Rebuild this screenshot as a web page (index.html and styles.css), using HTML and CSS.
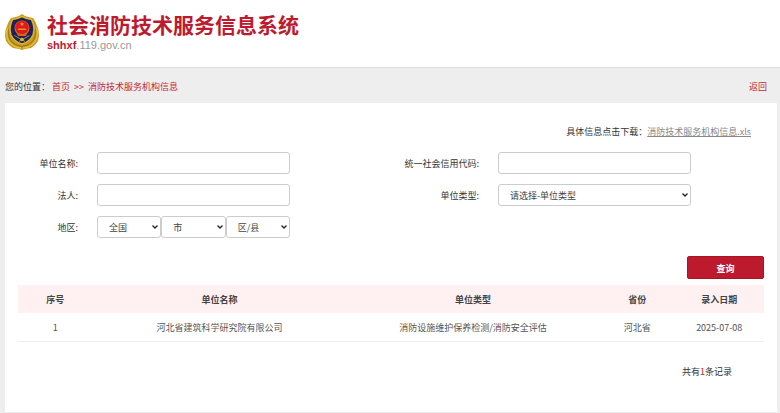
FILE: index.html
```html
<!DOCTYPE html>
<html lang="zh-CN">
<head>
    <meta charset="utf-8">
    <title>社会消防技术服务信息系统</title>
    <link rel="stylesheet" href="styles.css">
</head>
<body>
    <header class="header">
        <svg class="emblem" viewBox="0 0 34 36" aria-hidden="true">
            <!-- wreath -->
            <path d="M17 0 L20 2 Q25 3.500 28 4 L30.500 8 L32 12 L33.500 16 L34 22 L33 27 L30 31 L26 34 L20 35 L17 36 L14 35 L8 34 L4 31 L1 27 L0 22 L.5 16 L2 12 L3.500 8 L6 4 Q9 3.500 14 2 Z" fill="#c79c22"/>
            <path d="M2.500 14 Q0 22 4.500 28.500 Q9 33.500 16 34 M31.500 14 Q34 22 29.500 28.500 Q25 33.500 18 34" fill="none" stroke="#e0bc40" stroke-width="1.500"/>
            <path d="M4 15 Q2.500 23 6.500 27.500 Q10 31.500 17 32.500 Q24 31.500 27.500 27.500 Q31.500 23 30 15" fill="none" stroke="#93701a" stroke-width="1"/>
            <!-- shield -->
            <path d="M17 2.500 Q22 5 26.500 5.500 Q30.500 14 28 21 Q25 27.500 17 30 Q9 27.500 6 21 Q3.500 14 7.500 5.500 Q12 5 17 2.500 Z" fill="#1c2358" stroke="#dcb535" stroke-width="1.500"/>
            <!-- national emblem -->
            <circle cx="17" cy="14" r="7.500" fill="#e0702a"/>
            <circle cx="17" cy="13.500" r="6.800" fill="#dc1c1b"/>
            <path d="M17 8 L17.600 9.500 H19.200 L17.900 10.500 L18.400 12 L17 11.100 L15.600 12 L16.100 10.500 L14.800 9.500 H16.400 Z" fill="#f8a12c"/>
            <path d="M13.500 14.500 H20.500 L21.500 16 H12.500 Z" fill="#f08a2c"/>
            <path d="M11.500 18.500 Q17 21.500 22.500 18.500 L21 22 H13 Z" fill="#d8641f"/>
            <!-- hatchet and hose -->
            <path d="M9.500 21.500 L20 27.500 M24.500 21.500 L14 27.500" stroke="#a98d3c" stroke-width="1" fill="none"/>
            <circle cx="17" cy="25.500" r="1.800" fill="#d9b53a"/>
        </svg>
        <div>
            <h1 class="site-name">社会消防技术服务信息系统</h1>
            <p class="site-url"><b>shhxf</b>.119.gov.cn</p>
        </div>
    </header>

    <main class="main">
        <nav class="location">
            <div>您的位置： <a href="#">首页</a> <span class="sep">&gt;&gt;</span> <a href="#">消防技术服务机构信息</a></div>
            <a href="#">返回</a>
        </nav>

        <div class="panel">
            <p class="download">具体信息点击下载：<a href="#">消防技术服务机构信息.xls</a></p>

            <form>
                <div class="fields">
                    <label for="unitName">单位名称:</label>
                    <input type="text" id="unitName">
                    <label for="creditCode">统一社会信用代码:</label>
                    <input type="text" id="creditCode">

                    <label for="legalPerson">法人:</label>
                    <input type="text" id="legalPerson">
                    <label for="unitType">单位类型:</label>
                    <select id="unitType">
                        <option>请选择-单位类型</option>
                    </select>

                    <label for="province">地区:</label>
                    <div class="area">
                        <select id="province">
                            <option>全国</option>
                        </select>
                        <select id="city" aria-label="市">
                            <option>市</option>
                        </select>
                        <select id="county" aria-label="区/县">
                            <option>区/县</option>
                        </select>
                    </div>
                </div>
                <div class="actions">
                    <button type="button" class="search">查询</button>
                </div>
            </form>

            <table class="list">
                <colgroup>
                    <col class="col-no">
                    <col class="col-name">
                    <col class="col-type">
                    <col class="col-province">
                    <col class="col-date">
                </colgroup>
                <thead>
                    <tr>
                        <th>序号</th>
                        <th>单位名称</th>
                        <th>单位类型</th>
                        <th>省份</th>
                        <th>录入日期</th>
                    </tr>
                </thead>
                <tbody>
                    <tr>
                        <td>1</td>
                        <td>河北省建筑科学研究院有限公司</td>
                        <td>消防设施维护保养检测/消防安全评估</td>
                        <td>河北省</td>
                        <td>2025-07-08</td>
                    </tr>
                </tbody>
            </table>

            <p class="total">共有<span>1</span>条记录</p>
        </div>
    </main>
</body>
</html>
```

FILE: styles.css
```css
* {
    box-sizing: border-box;
}

body {
    margin: 0;
    background-color: #eee;
    color: #333;
    font-family: "Noto Sans CJK SC", sans-serif;
    font-size: 9px;
    line-height: 18px;
}

h1, p {
    margin: 0;
}

a {
    color: #c7262f;
    text-decoration: none;
}

.header {
    display: flex;
    align-items: center;
    gap: 8px;
    height: 68px;
    padding: 0 5px 3px;
    background-color: #fff;
    border-bottom: 1px solid #ddd;
}

.emblem {
    width: 34px;
    height: 36px;
}

.site-name {
    color: #bd1a2d;
    font-size: 21px;
    font-weight: bold;
    line-height: 26px;
}

.site-url {
    color: #999;
    font-family: "Liberation Sans", Arial, sans-serif;
    font-size: 11px;
    line-height: 16px;
}

.site-url b {
    color: #bd1a2d;
}

.main {
    padding: 0 3px 1px 5px;
}

.location {
    display: flex;
    justify-content: space-between;
    height: 35px;
    padding-right: 10px;
    line-height: 37px;
}

.sep {
    margin: 0 2px;
    color: #c7262f;
}

.panel {
    padding: 20px 13px 31px;
    background-color: #fff;
}

.download {
    padding-right: 13px;
    text-align: right;
}

.download a {
    color: #888;
    text-decoration: underline;
}

.fields {
    display: grid;
    grid-template-columns: 60fr 193fr 170fr 193fr;
    gap: 10px 19px;
    padding: 11px 73px 0 0;
}

.fields label {
    height: 22px;
    line-height: 24px;
    text-align: right;
}

.fields input,
.fields select {
    width: 100%;
    min-width: 0;
    height: 22px;
    padding: 0 7px;
    background-color: #fff;
    border: 1px solid #ccc;
    border-radius: 3px;
    color: #444;
    font-family: inherit;
    font-size: 9px;
}

.fields select {
    appearance: none;
    padding: 1px 12px 0 11px;
    background: #fff url("data:image/svg+xml,%3Csvg xmlns='http://www.w3.org/2000/svg' width='6' height='4'%3E%3Cpath d='M.5 .5 3 3 5.5 .5' fill='none' stroke='%23222' stroke-width='1.3'/%3E%3C/svg%3E") no-repeat right 2px center;
}

.area {
    display: flex;
}

.actions {
    display: flex;
    justify-content: flex-end;
    padding: 18px 0 6px;
}

.search {
    width: 77px;
    height: 23px;
    padding: 1px 0 0;
    background-color: #bd1a2d;
    border: 1px solid #a91425;
    border-radius: 2px;
    color: #fff;
    font-family: inherit;
    font-size: 9px;
    font-weight: bold;
    cursor: pointer;
}

.list {
    width: 100%;
    border-collapse: collapse;
    table-layout: fixed;
    text-align: center;
}

.col-no,
.col-province {
    width: 10%;
}

.col-type {
    width: 34%;
}

.col-date {
    width: 12%;
}

.list th,
.list td {
    height: 28px;
    padding: 2px 0 0;
}

.list th {
    background-color: #fff1f1;
    color: #444;
}

.list td {
    border-bottom: 1px solid #eee;
    color: #555;
}

.total {
    padding: 21px 32px 0 0;
    text-align: right;
}

.total span {
    color: #c7262f;
}
```
